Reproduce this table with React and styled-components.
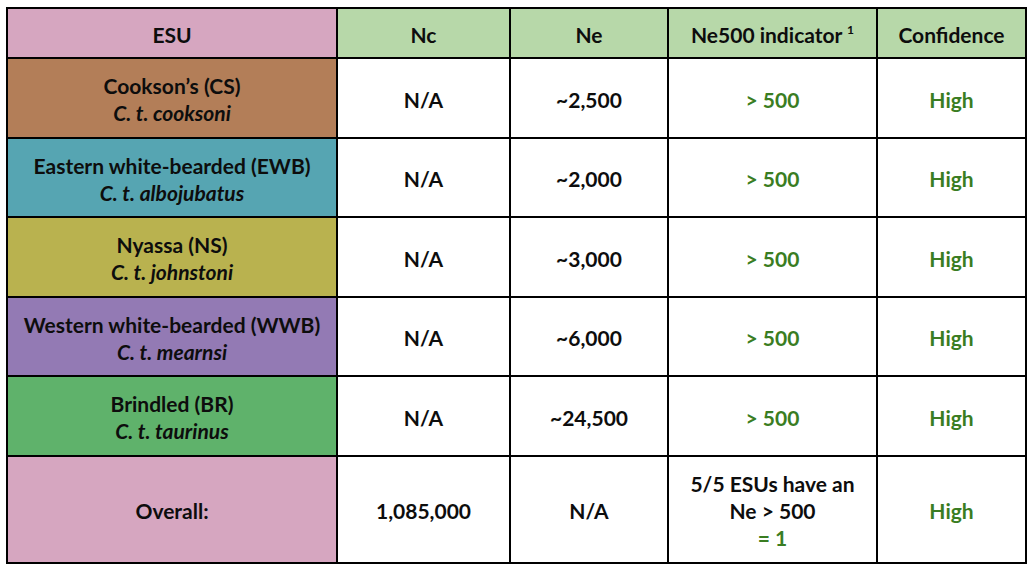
import styled, { createGlobalStyle } from "styled-components";

// ── Data ──────────────────────────────────────────────────

const rows = [
  { name: "Cookson’s (CS)", latin: "C. t. cooksoni", color: "#B37E58", ne: "~2,500" },
  { name: "Eastern white-bearded (EWB)", latin: "C. t. albojubatus", color: "#56A5B2", ne: "~2,000" },
  { name: "Nyassa (NS)", latin: "C. t. johnstoni", color: "#B9B24F", ne: "~3,000" },
  { name: "Western white-bearded (WWB)", latin: "C. t. mearnsi", color: "#937AB4", ne: "~6,000" },
  { name: "Brindled (BR)", latin: "C. t. taurinus", color: "#5FB26B", ne: "~24,500" },
];

const columns = [330, 173, 158, 209, 149];

// ── Styles ────────────────────────────────────────────────

const GlobalStyle = createGlobalStyle`
  html, body {
    margin: 0;
    background: #FFFFFF;
  }
`;

const Page = styled.div`
  padding: 7px 0 0 6px;
`;

const Table = styled.table`
  border-collapse: collapse;
  table-layout: fixed;
  width: 1019px;
  font-family: Lato, "Open Sans", sans-serif;
  font-weight: 700;
  font-size: 21px;
  color: #0D0D0D;
  border: 2px solid #000;
`;

const HeadRow = styled.tr`
  height: 50px;
`;

const HeadCell = styled.th`
  padding: 4px 4px 0;
  font-weight: 700;
  line-height: 24px;
  text-align: center;
  vertical-align: middle;
  border: 2px solid #000;
  background: ${p => p.$bg || "#B7D8A9"};

  sup {
    font-size: 12px;
    vertical-align: 9px;
    line-height: 0;
  }
`;

const Row = styled.tr`
  height: ${p => p.$tall ? "107px" : "79.5px"};
`;

const Cell = styled.td`
  padding: 3px 4px 0;
  text-align: center;
  vertical-align: middle;
  line-height: 27px;
  border: 2px solid #000;
  background: ${p => p.$bg || "#FFFFFF"};
  color: ${p => p.$green ? "#3A7D22" : "inherit"};
`;

const Latin = styled.i`
  display: block;
  font-style: italic;
`;

const Line = styled.span`
  display: block;
  color: ${p => p.$green ? "#3A7D22" : "inherit"};
`;

// ── App ───────────────────────────────────────────────────

export default function App() {
  return (
    <Page>
      <GlobalStyle />
      <Table>
        <colgroup>
          {columns.map((w, i) => <col key={i} style={{ width: w }} />)}
        </colgroup>
        <thead>
          <HeadRow>
            <HeadCell $bg="#D6A6C0">ESU</HeadCell>
            <HeadCell>Nc</HeadCell>
            <HeadCell>Ne</HeadCell>
            <HeadCell>Ne500 indicator <sup>1</sup></HeadCell>
            <HeadCell>Confidence</HeadCell>
          </HeadRow>
        </thead>
        <tbody>
          {rows.map(r => (
            <Row key={r.name}>
              <Cell $bg={r.color}>
                <Line>{r.name}</Line>
                <Latin>{r.latin}</Latin>
              </Cell>
              <Cell>N/A</Cell>
              <Cell>{r.ne}</Cell>
              <Cell $green>&gt; 500</Cell>
              <Cell $green>High</Cell>
            </Row>
          ))}
          <Row $tall>
            <Cell $bg="#D6A6C0">Overall:</Cell>
            <Cell>1,085,000</Cell>
            <Cell>N/A</Cell>
            <Cell>
              <Line>5/5 ESUs have an</Line>
              <Line>Ne &gt; 500</Line>
              <Line $green>= 1</Line>
            </Cell>
            <Cell $green>High</Cell>
          </Row>
        </tbody>
      </Table>
    </Page>
  );
}
